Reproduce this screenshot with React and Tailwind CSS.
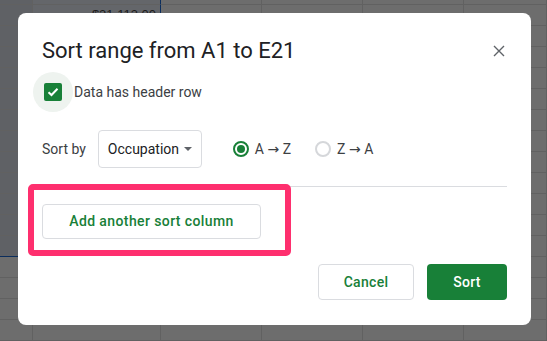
import React from "react";

const colW = ["w-[33px]", "w-[128px]", "w-[101px]", "w-[101px]", "w-[101px]", "flex-1"];

function SheetRow({ r }) {
  const selected = r <= 12;
  return (
    <div className={`flex ${r === 0 ? "h-[5px]" : "h-[21px]"}`}>
      {colW.map((w, c) => {
        const inSel = selected && c < 2;
        const bg = inSel ? (c === 0 ? "bg-[#5f6165]" : "bg-[#64666a]") : "";
        const bottom = inSel && r === 12 ? "border-b-[#0b2d5c]" : "border-b-[#616161]";
        const right = c === 1 && selected ? "border-r-[#0b2d5c]" : "border-r-[#616161]";
        return (
          <div key={c} className={`${w} ${bg} border-b border-r ${bottom} ${right} flex items-center justify-end pr-[4px]`}>
            {r === 1 && c === 1 && (
              <span className="text-[13px] text-[#1c1c1c]" style={{ fontFamily: '"Liberation Sans", Arial, sans-serif' }}>
                $21,113.00
              </span>
            )}
          </div>
        );
      })}
    </div>
  );
}

function Radio({ checked, from, to }) {
  return (
    <label className="flex items-center gap-[6px]">
      {checked ? (
        <span className="w-[16px] h-[16px] rounded-full border-2 border-[#188038] flex items-center justify-center">
          <span className="w-[8px] h-[8px] rounded-full bg-[#188038]" />
        </span>
      ) : (
        <span className="w-[16px] h-[16px] rounded-full border-2 border-[#d5d7da]" />
      )}
      <span className="text-[14px] text-[#3c4043]">
        {from} <span className="font-['DejaVu_Sans'] text-[14px]">→</span> {to}
      </span>
    </label>
  );
}

export default function App() {
  const rows = Array.from({ length: 17 }, (_, i) => i);
  return (
    <div className="relative w-[547px] h-[341px] overflow-hidden bg-[#6d6d6d]" style={{ fontFamily: "Roboto, Arial, sans-serif" }}>
      <div className="flex flex-col">
        {rows.map((r) => (
          <SheetRow key={r} r={r} />
        ))}
      </div>

      <div className="absolute left-[18px] top-[13px] w-[513px] h-[312px] bg-white rounded-[8px] px-[24px] pt-[24px]">
        <div className="flex items-center justify-between h-[28px]">
          <h1 className="text-[22px] leading-[28px] text-[#202124]">Sort range from A1 to E21</h1>
          <button className="w-[24px] h-[24px] flex items-center justify-center mr-[-4px]">
            <svg width="12" height="12" viewBox="0 0 12 12">
              <path d="M1 1L11 11M11 1L1 11" stroke="#5f6368" strokeWidth="1.4" />
            </svg>
          </button>
        </div>

        <div className="flex items-center mt-[7px] ml-[-9px]">
          <span className="w-[40px] h-[40px] rounded-full bg-[#eef3ef] flex items-center justify-center">
            <span className="w-[18px] h-[18px] rounded-[2px] bg-[#188038] flex items-center justify-center">
              <svg width="12" height="10" viewBox="0 0 12 10">
                <path d="M1.5 5.2L4.5 8L10.5 1.8" stroke="white" strokeWidth="2" fill="none" />
              </svg>
            </span>
          </span>
          <span className="ml-[1px] text-[14px] text-[#3c4043]">Data has header row</span>
        </div>

        <div className="flex items-center mt-[18px] h-[38px]">
          <span className="text-[14px] text-[#3c4043]">Sort by</span>
          <div className="ml-[12px] w-[104px] h-[38px] border border-[#dadce0] rounded-[4px] flex items-center pl-[9px] pr-[9px] justify-between">
            <span className="text-[14px] text-[#202124]">Occupation</span>
            <span className="w-0 h-0 border-l-[4px] border-r-[4px] border-t-[4px] border-l-transparent border-r-transparent border-t-[#5f6368]" />
          </div>
          <div className="ml-[31px] flex items-center gap-[24px]">
            <Radio checked from="A" to="Z" />
            <Radio from="Z" to="A" />
          </div>
        </div>

        <div className="mt-[18px] h-px bg-[#dadce0]" />

        <button className="mt-[17px] w-[219px] h-[35px] border border-[#dadce0] rounded-[4px] text-[14px] font-medium text-[#188038] tracking-[0.4px]">
          Add another sort column
        </button>

        <div className="mt-[25px] flex justify-end gap-[13px]">
          <button className="w-[96px] h-[36px] border border-[#dadce0] rounded-[4px] text-[14px] font-medium text-[#188038] tracking-[0.3px]">
            Cancel
          </button>
          <button className="w-[80px] h-[36px] rounded-[4px] bg-[#188038] text-[14px] font-medium text-white tracking-[0.3px]">
            Sort
          </button>
        </div>

        <div className="absolute left-[10px] top-[171px] w-[263px] h-[72px] border-[6px] border-[#fe2f6e] rounded-[5px] pointer-events-none" />
      </div>
    </div>
  );
}
